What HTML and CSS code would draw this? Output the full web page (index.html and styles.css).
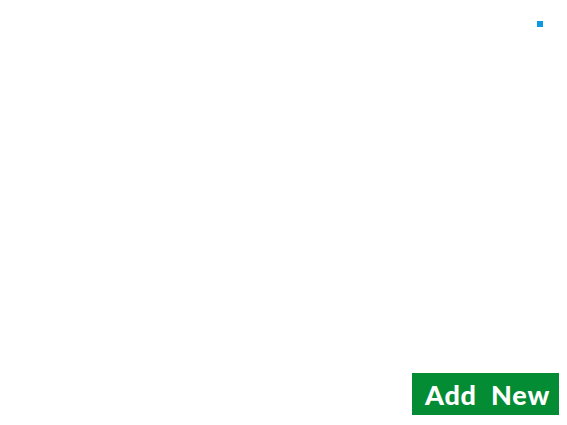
FILE: index.html
```html
<!DOCTYPE html>
<html>
<head>
<meta charset="utf-8">
<link rel="stylesheet" href="styles.css">
</head>
<body>
<div class="page">
  <header class="topbar"><span class="dot"></span></header>
  <main class="content"></main>
  <footer class="actions"><button class="add-btn">Add New</button></footer>
</div>
</body>
</html>
```
FILE: styles.css
```css
html, body {
  margin: 0;
  padding: 0;
  background: #ffffff;
}
.page {
  width: 567px;
  height: 425px;
  display: flex;
  flex-direction: column;
}
.topbar {
  display: flex;
  justify-content: flex-end;
  padding: 21px 24px 0 0;
}
.dot {
  display: block;
  width: 6px;
  height: 6px;
  background: #0a9ae2;
}
.content {
  flex: 1;
}
.actions {
  display: flex;
  justify-content: flex-end;
  padding: 0 8px 10px 0;
}
.add-btn {
  width: 147px;
  height: 42px;
  border: 0;
  margin: 0;
  padding: 1px 0 0 4px;
  background: #048c35;
  color: #ffffff;
  font-family: Lato, sans-serif;
  font-weight: 900;
  font-size: 27px;
  letter-spacing: 0.8px;
  word-spacing: 7px;
}
```
